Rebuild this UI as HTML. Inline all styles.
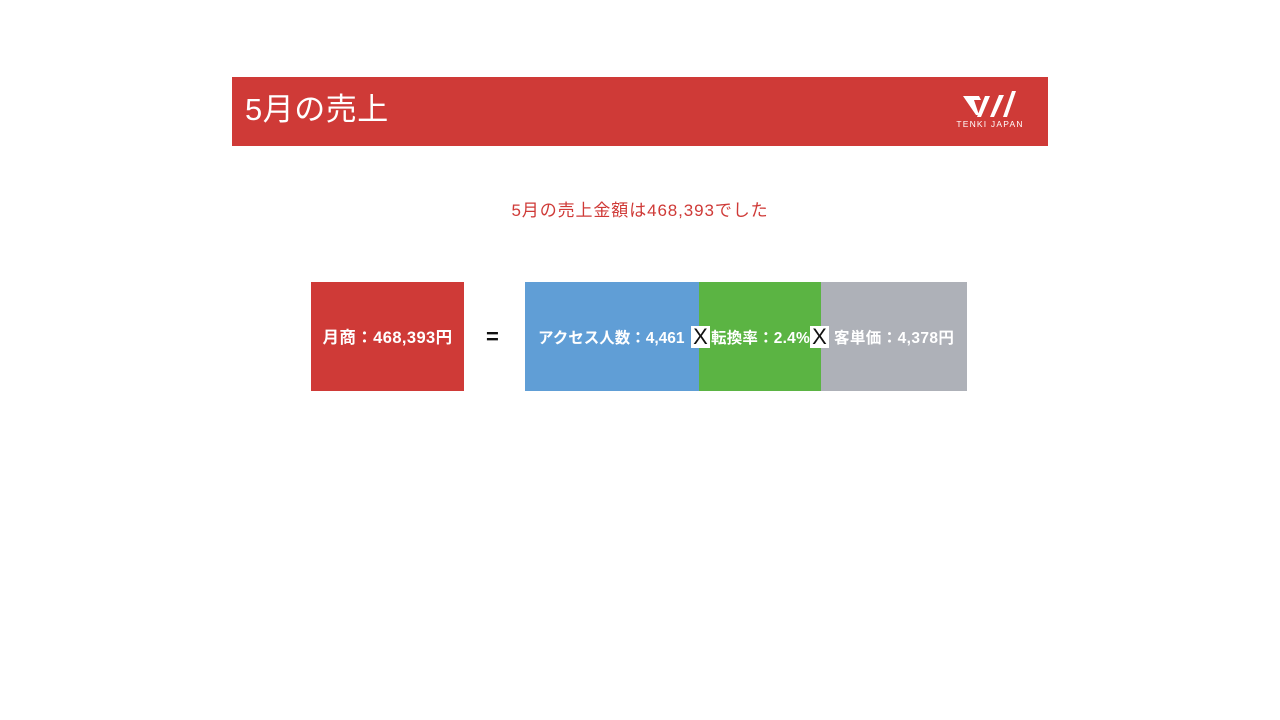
<!DOCTYPE html>
<html><head><meta charset="utf-8"><style>
body{margin:0;width:1280px;height:720px;background:#fff;position:relative;font-family:"Liberation Sans","Noto Sans CJK JP",sans-serif;overflow:hidden}
.hdr{position:absolute;left:232px;top:77px;width:816px;height:69px;background:#cf3a37}
.hdr h1{position:absolute;left:13px;top:13px;margin:0;font-weight:400;font-size:31px;letter-spacing:0.5px;color:#fff;line-height:40px}
.sub{position:absolute;left:0;width:1280px;top:196px;text-align:center;color:#cf3a37;font-size:17px;letter-spacing:0.9px}
.b{position:absolute;top:284px;height:109px;color:#fff;font-weight:bold;font-size:15.5px;line-height:109px;white-space:nowrap;letter-spacing:0.4px}
.x{position:absolute;top:326px;width:19px;height:22px;background:#fff;color:#111;font-size:22px;line-height:22px;text-align:center;font-weight:400}
.bg{position:absolute;top:282px;height:109px}
</style></head><body>
<div class="hdr"><h1>5月の売上</h1>
<svg style="position:absolute;left:720px;top:12px" width="80" height="42" viewBox="0 0 80 42">
<polygon points="11,7 27,7 29,11 22,11 27,26 24,26" fill="#fff"/>
<polygon points="33,7 38,7 29,28 25,28" fill="#fff"/>
<polygon points="47,6 52,6 42,28 38,28" fill="#fff"/>
<polygon points="60,2 64,2 55,28 51,28" fill="#fff"/>
<text x="38" y="38" text-anchor="middle" fill="#fff" font-size="8.5" letter-spacing="1.2" font-family="Liberation Sans">TENKI JAPAN</text>
</svg></div>
<div class="sub">5月の売上金額は468,393でした</div>
<div class="bg" style="left:311px;width:153px;background:#cf3a37"></div>
<div class="bg" style="left:525px;width:174px;background:#609ed6"></div>
<div class="bg" style="left:699px;width:122px;background:#5bb443"></div>
<div class="bg" style="left:821px;width:146px;background:#aeb1b8"></div>
<div class="b" style="left:311px;width:153px;text-align:center;font-size:16.5px">月商：468,393円</div>
<div style="position:absolute;left:486px;top:324px;font-size:22px;font-weight:bold;color:#111">=</div>
<div class="b" style="left:538px;letter-spacing:0">アクセス人数：4,461</div>
<div class="b" style="left:711px;letter-spacing:0.2px">転換率：2.4%</div>
<div class="b" style="left:834px">客単価：4,378円</div>
<div class="x" style="left:691px">X</div>
<div class="x" style="left:810px">X</div>
</body></html>
